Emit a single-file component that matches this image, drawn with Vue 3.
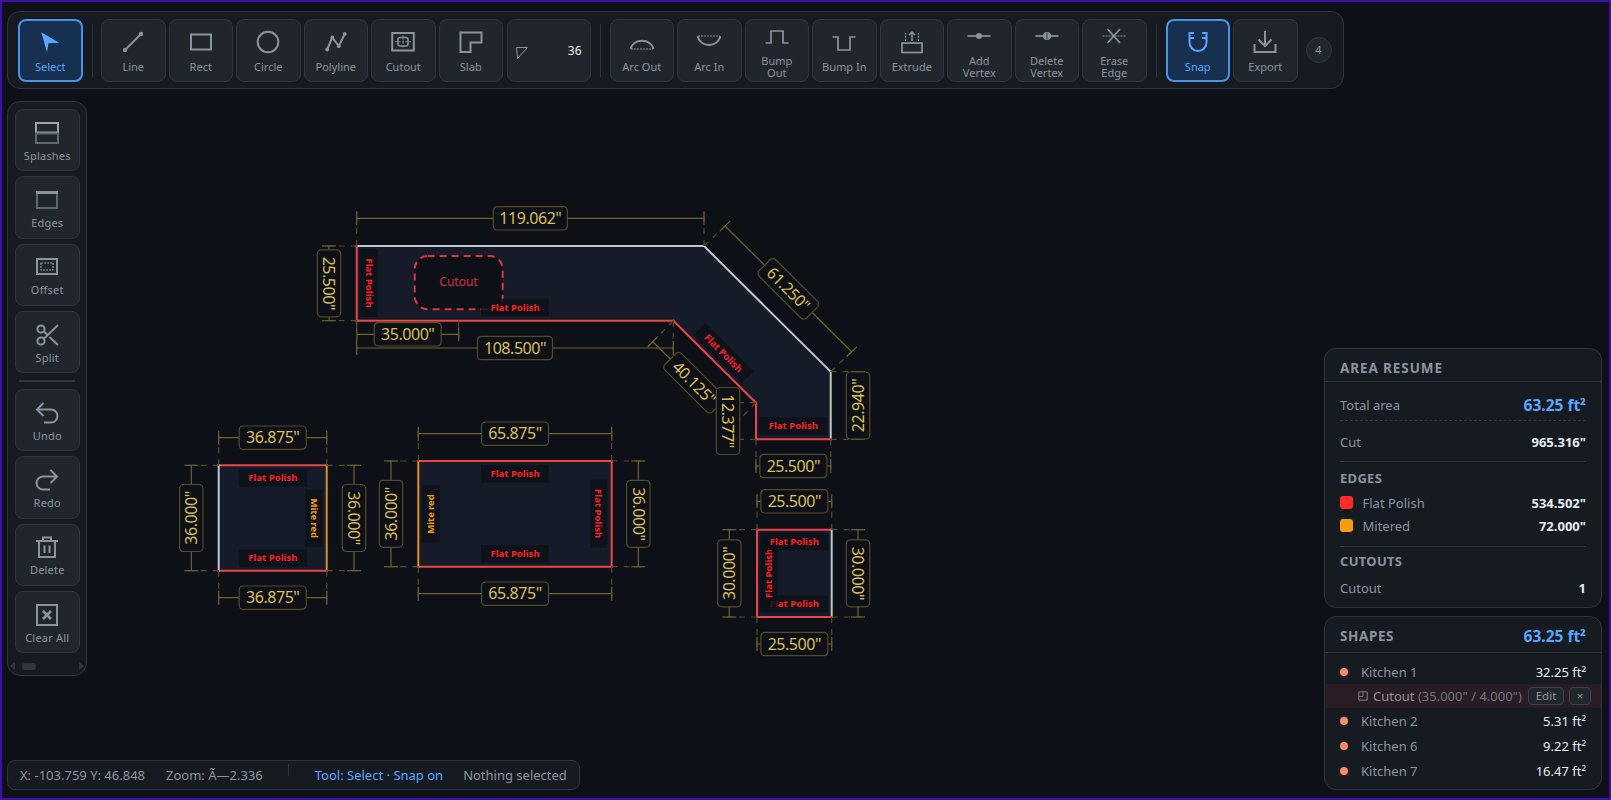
<script setup>
// toolbar icons, drawn on a 24 box
const arrow = '<path d="M3.3 2.3 21.2 12.7 10.5 13.3 9 22.3Z" fill="currentColor" stroke="none"/>'
const tools1 = [
  { label: 'Line', icon: '<path d="M4 20 20 4"/><circle cx="4" cy="20" r="2.2" fill="currentColor" stroke="none"/><circle cx="20" cy="4" r="2.2" fill="currentColor" stroke="none"/>' },
  { label: 'Rect', icon: '<rect x="2" y="4.5" width="20" height="15"/>' },
  { label: 'Circle', icon: '<circle cx="12" cy="12" r="10.3"/>' },
  { label: 'Polyline', icon: '<path d="M3.1 19.5 8.3 7.5 14.8 16.2 20.7 4"/><circle cx="3.1" cy="19.5" r="1.9" fill="currentColor" stroke="none"/><circle cx="8.3" cy="7.5" r="1.9" fill="currentColor" stroke="none"/><circle cx="14.8" cy="16.2" r="1.9" fill="currentColor" stroke="none"/><circle cx="20.7" cy="4" r="1.9" fill="currentColor" stroke="none"/>' },
  { label: 'Cutout', icon: '<rect x="1.2" y="3" width="21.6" height="17.5"/><rect x="7" y="7.5" width="10" height="8.5" rx="2" stroke-width="1.6"/><path d="M4 11.7H20M12 5V18.5" stroke-width=".8" stroke-dasharray="2 1.5"/>' },
  { label: 'Slab', icon: '<path d="M1.5 2.5H22.5V12.5H11.5V22H1.5Z"/>' },
]
const tools2 = [
  { label: 'Arc Out', icon: '<path d="M.5 19C3.5 8 20.5 8 23.5 19"/><path d="M1 19H23" stroke-width="1" stroke-dasharray="2 1"/>' },
  { label: 'Arc In', icon: '<path d="M.5 6C3.5 18 20.5 18 23.5 6"/><path d="M1 6H23" stroke-width="1" stroke-dasharray="2 1"/>' },
  { label: ['Bump', 'Out'], icon: '<path d="M.5 19H6V7H18V19H23.5" stroke-width="1.7"/>' },
  { label: 'Bump In', icon: '<path d="M.5 7H6V20H18V7H23.5" stroke-width="1.7"/>' },
  { label: 'Extrude', icon: '<rect x="2" y="13" width="20" height="9.5" stroke-width="1.7"/><path d="M12 11V2M9 5 12 2 15 5" stroke-width="1.5"/><path d="M5.5 11V3M18.5 11V3" stroke-width="1.2" stroke-dasharray="2 1.2"/>' },
  { label: ['Add', 'Vertex'], icon: '<path d="M.5 12H23.5" stroke-width="1.7"/><circle cx="12" cy="12" r="3" fill="currentColor" stroke="none"/>' },
  { label: ['Delete', 'Vertex'], icon: '<path d="M.5 12H23.5" stroke-width="1.7"/><circle cx="12" cy="12" r="4" fill="currentColor" stroke="none"/><path d="M12 8.5V15.5" stroke="#21262d" stroke-width=".8"/>' },
  { label: ['Erase', 'Edge'], icon: '<path d="M.5 12H23.5" stroke-width="1" stroke-dasharray="2 1"/><path d="M5.5 5 18 19M18 5 5.5 19" stroke-width="1.7"/>' },
]
const snapIcon = '<path d="M8 3H3.5V12.5A8.5 8.5 0 0 0 20.5 12.5V3H16M3.5 8H8M20.5 8H16"/>'
const exportIcon = '<path d="M12 1V16M5.5 9.5 12 16 18.5 9.5"/><path d="M1.5 14V22H22.5V14"/>'

const sideTop = [
  { label: 'Splashes', icon: '<rect x="1" y="2" width="22" height="9.5" stroke="#9ba3ad"/><rect x="1" y="12.5" width="22" height="9.5" stroke="#5f6770"/>' },
  { label: 'Edges', icon: '<rect x="2" y="5" width="20" height="15" stroke="#5f6770"/><path d="M1 4.5H23" stroke-width="3"/>' },
  { label: 'Offset', icon: '<rect x="2" y="4" width="20" height="15"/><rect x="6" y="8" width="12" height="7" stroke-width="1.2" stroke-dasharray="2 1"/>' },
  { label: 'Split', icon: '<circle cx="6" cy="6" r="3.6"/><circle cx="6" cy="18" r="3.6"/><path d="M23 2 9 15.5M14.5 14 23 22M9 8.5 12 11.5"/>' },
]
const sideBottom = [
  { label: 'Undo', icon: '<path d="M8.5 15 2 8.5 8.5 2"/><path d="M2 8.5H16A6.5 6.5 0 0 1 16 21.5H9"/>' },
  { label: 'Redo', icon: '<path d="M15.5 15 22 8.5 15.5 2"/><path d="M22 8.5H8A6.5 6.5 0 0 0 8 21.5H15"/>' },
  { label: 'Delete', icon: '<path d="M1 6H23M8 6V2.5H16V6M4 6V22H20V6M9.5 10.5V18M14.5 10.5V18"/>' },
  { label: 'Clear All', icon: '<rect x="2" y="2" width="20" height="20"/><path d="M8 8 16 16M16 8 8 16" stroke-width="2.6"/>' },
]

// shapes on the canvas
const slab = [[356.7, 246], [704, 246], [830.7, 371.7], [830.7, 439.3], [756, 439.3], [756, 402.7], [673.3, 320.7], [356.7, 320.7]]
const WHITE = '#c0c6ce'
const RED = '#ef4444'
const ORANGE = '#e08e1f'

function rectPoints(x1, y1, x2, y2) {
  return [[x1, y1], [x2, y1], [x2, y2], [x1, y2]]
}
const shapes = [
  { pts: slab, edges: [WHITE, WHITE, WHITE, RED, RED, RED, RED, RED] },
  { pts: rectPoints(218.7, 465.3, 326.7, 570.7), edges: [RED, ORANGE, RED, WHITE] },
  { pts: rectPoints(418.3, 461, 611.7, 566.7), edges: [RED, RED, RED, ORANGE] },
  { pts: rectPoints(757, 529.7, 831.7, 617), edges: [RED, WHITE, RED, RED] },
]
const toPath = (pts) => pts.map(p => p.join(',')).join(' ')

function dim(a, b, off, text, rot = 0, w = 67) {
  const len = Math.hypot(off[0], off[1])
  const u = [off[0] / len, off[1] / len]
  const p1 = [a[0] + off[0], a[1] + off[1]]
  const p2 = [b[0] + off[0], b[1] + off[1]]
  return {
    text, w, rot, p1, p2,
    cx: (p1[0] + p2[0]) / 2,
    cy: (p1[1] + p2[1]) / 2,
    ext: [[a, p1], [b, p2]].map(([s, p]) => [s, [p[0] + u[0] * 7, p[1] + u[1] * 7]]),
    ticks: [p1, p2].map(p => [[p[0] - u[0] * 7, p[1] - u[1] * 7], [p[0] + u[0] * 7, p[1] + u[1] * 7]]),
  }
}
const s2 = [218.7, 465.3, 326.7, 570.7]
const s3 = [418.3, 461, 611.7, 566.7]
const s4 = [757, 529.7, 831.7, 617]
function boxDims(s, top, bottom, left, right, wText, hText, rightRot = 90) {
  return [
    dim([s[0], s[1]], [s[2], s[1]], [0, top], wText),
    dim([s[0], s[3]], [s[2], s[3]], [0, bottom], wText),
    dim([s[0], s[1]], [s[0], s[3]], [left, 0], hText, -90),
    dim([s[2], s[1]], [s[2], s[3]], [right, 0], hText, rightRot),
  ]
}
const dims = [
  dim([356.7, 246], [704, 246], [0, -27.7], '119.062"', 0, 74),
  dim([356.7, 246], [356.7, 320.7], [-27.7, 0], '25.500"', 90),
  dim([356.7, 320.7], [458.7, 320.7], [0, 13.6], '35.000"'),
  dim([356.7, 320.7], [673.3, 320.7], [0, 27.3], '108.500"', 0, 75),
  dim([704, 246], [830.7, 371.7], [21, -20], '61.250"', 45, 67),
  dim([673.3, 320.7], [756, 402.7], [-20.5, 21], '40.125"', 45, 67),
  dim([756, 402.7], [756, 439.3], [-28, 0], '12.377"', 90),
  dim([830.7, 371.7], [830.7, 439.3], [27.3, 0], '22.940"', -90),
  dim([756, 439.3], [830.7, 439.3], [0, 26.7], '25.500"'),
  ...boxDims(s2, -27.6, 27, -27.4, 27.3, '36.875"', '36.000"'),
  ...boxDims(s3, -27.3, 27, -27.3, 26.6, '65.875"', '36.000"'),
  ...boxDims(s4, -28.4, 27, -27.7, 26.3, '25.500"', '30.000"'),
]

// edge finish labels: centre, rotation, box size
const finishes = [
  { x: 369, y: 283, rot: 90, w: 68 },
  { x: 515, y: 307.5, rot: 0, w: 68 },
  { x: 723.3, y: 353.3, rot: 45, w: 68 },
  { x: 793.3, y: 426, rot: 0, w: 68 },
  { x: 272.8, y: 478, rot: 0, w: 68 },
  { x: 272.8, y: 558, rot: 0, w: 68 },
  { x: 314, y: 518.3, rot: 90, w: 57, miter: true },
  { x: 515, y: 474, rot: 0, w: 68 },
  { x: 515, y: 554, rot: 0, w: 68 },
  { x: 431, y: 514, rot: -90, w: 57, miter: true },
  { x: 598.7, y: 513.7, rot: 90, w: 68 },
  { x: 794.3, y: 604, rot: 0, w: 68 },
  { x: 769, y: 573.3, rot: -90, w: 68 },
  { x: 794.3, y: 541.5, rot: 0, w: 68 },
]

const shapeRows = [
  { name: 'Kitchen 1', area: '32.25' },
  { name: 'Kitchen 2', area: '5.31' },
  { name: 'Kitchen 6', area: '9.22' },
  { name: 'Kitchen 7', area: '16.47' },
]
</script>

<template>
  <div class="app">
    <svg class="canvas" width="1611" height="800" viewBox="0 0 1611 800">
      <g v-for="(s, i) in shapes" :key="'s' + i">
        <polygon :points="toPath(s.pts)" fill="#151b28" />
      </g>
      <rect x="414.7" y="256" width="88" height="53.3" rx="13" fill="#0d1117" stroke="#e5303f" stroke-width="2" stroke-dasharray="7 5" />
      <text x="458.5" y="282" class="cut-text" text-anchor="middle" dy=".35em">Cutout</text>
      <g v-for="(s, i) in shapes" :key="'e' + i">
        <line
          v-for="(p, j) in s.pts"
          :key="j"
          :x1="p[0]" :y1="p[1]"
          :x2="s.pts[(j + 1) % s.pts.length][0]" :y2="s.pts[(j + 1) % s.pts.length][1]"
          :stroke="s.edges[j]"
          stroke-width="2"
          stroke-linecap="square"
        />
      </g>
      <g v-for="(f, i) in finishes" :key="'f' + i" :transform="`translate(${f.x} ${f.y}) rotate(${f.rot})`">
        <rect :x="-f.w / 2" y="-8.7" :width="f.w" height="17.4" fill="#0d1117" fill-opacity=".82" />
        <text v-if="f.miter" class="finish miter" text-anchor="middle" dy=".35em">Mite<tspan dx="2">red</tspan></text>
        <text v-else class="finish" text-anchor="middle" dy=".35em">Flat Polish</text>
      </g>
      <g v-for="(d, i) in dims" :key="'d' + i">
        <line
          v-for="(l, j) in d.ext"
          :key="'x' + j"
          :x1="l[0][0]" :y1="l[0][1]" :x2="l[1][0]" :y2="l[1][1]"
          class="dim-ext"
        />
        <line :x1="d.p1[0]" :y1="d.p1[1]" :x2="d.p2[0]" :y2="d.p2[1]" class="dim-line" />
        <line
          v-for="(l, j) in d.ticks"
          :key="'t' + j"
          :x1="l[0][0]" :y1="l[0][1]" :x2="l[1][0]" :y2="l[1][1]"
          class="dim-line"
        />
        <g :transform="`translate(${d.cx} ${d.cy}) rotate(${d.rot})`">
          <rect :x="-d.w / 2" y="-11.7" :width="d.w" height="23.4" rx="4" class="dim-box" />
          <text class="dim-text" text-anchor="middle" dy=".36em">{{ d.text }}</text>
        </g>
      </g>
    </svg>

    <div class="overlay">
      <div class="toolbar">
        <button class="tool active">
          <svg class="icon" viewBox="0 0 24 24" v-html="arrow"></svg>
          <span class="lbl">Select</span>
        </button>
        <div class="vsep first"></div>
        <button v-for="t in tools1" :key="t.label" class="tool">
          <svg class="icon" viewBox="0 0 24 24" v-html="t.icon"></svg>
          <span class="lbl">{{ t.label }}</span>
        </button>
        <div class="tool angle">
          <svg class="tri" viewBox="0 0 12 12"><path d="M.5 .5H11.5L1.5 11.5Z" /></svg>
          <span class="angle-val">36</span>
        </div>
        <div class="vsep"></div>
        <button v-for="t in tools2" :key="String(t.label)" class="tool">
          <svg class="icon" viewBox="0 0 24 24" v-html="t.icon"></svg>
          <span v-if="Array.isArray(t.label)" class="lbl">{{ t.label[0] }}<br />{{ t.label[1] }}</span>
          <span v-else class="lbl">{{ t.label }}</span>
        </button>
        <div class="vsep"></div>
        <button class="tool active">
          <svg class="icon" viewBox="0 0 24 24" v-html="snapIcon"></svg>
          <span class="lbl">Snap</span>
        </button>
        <button class="tool">
          <svg class="icon" viewBox="0 0 24 24" v-html="exportIcon"></svg>
          <span class="lbl">Export</span>
        </button>
        <div class="badge">4</div>
      </div>

      <div class="side">
        <button v-for="t in sideTop" :key="t.label" class="tool">
          <svg class="icon" viewBox="0 0 24 24" v-html="t.icon"></svg>
          <span class="lbl">{{ t.label }}</span>
        </button>
        <div class="hsep"></div>
        <button v-for="t in sideBottom" :key="t.label" class="tool">
          <svg class="icon" viewBox="0 0 24 24" v-html="t.icon"></svg>
          <span class="lbl">{{ t.label }}</span>
        </button>
        <div class="scroll">
          <span class="arr arr-l"></span>
          <span class="thumb"></span>
          <span class="arr arr-r"></span>
        </div>
      </div>

      <div class="right">
        <section class="panel">
          <header class="head">AREA RESUME</header>
          <div class="body">
            <div class="row total">
              <span>Total area</span>
              <b class="blue big">63.25 ft²</b>
            </div>
            <div class="row cut">
              <span>Cut</span>
              <b>965.316"</b>
            </div>
            <div class="sub">EDGES</div>
            <div class="row edge">
              <span class="with-swatch"><i class="swatch red"></i>Flat Polish</span>
              <b>534.502"</b>
            </div>
            <div class="row edge">
              <span class="with-swatch"><i class="swatch orange"></i>Mitered</span>
              <b>72.000"</b>
            </div>
            <div class="sub second">CUTOUTS</div>
            <div class="row edge">
              <span>Cutout</span>
              <b>1</b>
            </div>
          </div>
        </section>

        <section class="panel shapes">
          <header class="head split">
            <span>SHAPES</span>
            <b class="blue big">63.25 ft²</b>
          </header>
          <div class="list">
            <template v-for="(s, i) in shapeRows" :key="s.name">
              <div class="shape-row">
                <span class="name"><i class="dot"></i>{{ s.name }}</span>
                <span class="area">{{ s.area }} ft²</span>
              </div>
              <div v-if="i === 0" class="cut-row">
                <svg class="cut-ico" viewBox="0 0 12 12"><path d="M1 1H11V11H1ZM1 6.5H6V1" /></svg>
                <span class="cut-name">Cutout <em>(35.000" / 4.000")</em></span>
                <button class="mini edit">Edit</button>
                <button class="mini close">×</button>
              </div>
            </template>
          </div>
        </section>
      </div>

      <div class="status">
        <span class="coord">X: -103.759 Y: 46.848</span>
        <span class="zoom">Zoom: Ã—2.336</span>
        <span class="status-sep"></span>
        <span class="tool-state">Tool: Select · Snap on</span>
        <span class="sel">Nothing selected</span>
      </div>
    </div>
  </div>
</template>

<style scoped>
.app {
  position: relative;
  width: 1611px;
  height: 800px;
  overflow: hidden;
  background: #0d1117;
  font-family: "Noto Sans", "Liberation Sans", sans-serif;
}
.app::after {
  content: "";
  position: absolute;
  inset: 0;
  border: 2px solid #3b0fa8;
  pointer-events: none;
}
.canvas {
  position: absolute;
  left: 0;
  top: 0;
}
.cut-text {
  fill: #d92c3c;
  font-size: 12px;
}
.finish {
  fill: #ff2020;
  font-size: 9.6px;
  font-weight: 700;
}
.miter {
  fill: #f59e0b;
}
.dim-line {
  stroke: #6e6230;
  stroke-width: 1.2;
}
.dim-ext {
  stroke: #544b27;
  stroke-width: 1.2;
  stroke-dasharray: 6 6;
}
.dim-box {
  fill: #0d1117;
  stroke: #544b27;
  stroke-width: 1.2;
}
.dim-text {
  fill: #d9bf55;
  font-size: 16px;
  letter-spacing: -.45px;
}

.overlay {
  position: relative;
  box-sizing: border-box;
  width: 100%;
  height: 100%;
  padding: 11px 9px 10px 7px;
  display: grid;
  grid-template-columns: auto 1fr auto;
  grid-template-rows: auto 1fr auto;
}

.toolbar {
  grid-column: 1 / -1;
  justify-self: start;
  display: flex;
  align-items: center;
  gap: 3px;
  height: 78px;
  box-sizing: border-box;
  padding: 0 11px 0 10px;
  background: #161b22;
  border: 1px solid #30363d;
  border-radius: 13px;
}
.tool {
  box-sizing: border-box;
  width: 64.5px;
  height: 63px;
  flex: none;
  display: flex;
  flex-direction: column;
  align-items: center;
  justify-content: center;
  gap: 7px;
  padding: 3px 0 0;
  background: #21262d;
  border: 1px solid #30363d;
  border-radius: 8px;
  color: #8b949e;
  font-family: inherit;
}
.tool.active {
  background: #17304f;
  border: 2px solid #4a94e8;
  color: #58a6ff;
}
.icon {
  width: 24px;
  height: 24px;
  flex: none;
  fill: none;
  stroke: currentColor;
  stroke-width: 2;
}
.lbl {
  font-size: 11px;
  line-height: 12px;
  text-align: center;
}
.vsep {
  width: 1px;
  height: 53px;
  margin: 0 6px;
  background: #30363d;
  flex: none;
}
.vsep.first {
  margin-right: 5.5px;
}
.angle {
  width: 83.5px;
  margin-left: 1px;
  flex-direction: row;
  justify-content: space-between;
  padding: 0 8px;
}
.tri {
  width: 12px;
  height: 12px;
  margin-top: 6px;
  fill: none;
  stroke: #8b949e;
  stroke-width: 1;
}
.angle-val {
  color: #e6edf3;
  font-size: 12px;
}
.badge {
  width: 26px;
  height: 26px;
  margin-left: 5px;
  box-sizing: border-box;
  border: 1px solid #30363d;
  border-radius: 50%;
  background: #21262d;
  color: #8b949e;
  font-size: 11px;
  line-height: 24px;
  text-align: center;
}

.side {
  grid-column: 1;
  grid-row: 2;
  align-self: start;
  margin-top: 11.5px;
  width: 80px;
  box-sizing: border-box;
  padding: 7.5px 7px 4px;
  display: flex;
  flex-direction: column;
  gap: 5px;
  background: #161b22;
  border: 1px solid #30363d;
  border-radius: 13px;
}
.side .tool {
  height: 62.3px;
  gap: 5px;
  padding-top: 2px;
}
.side .lbl {
  letter-spacing: .2px;
}
.hsep {
  height: 2px;
  margin: 2px 4px;
  background: #30363d;
}
.scroll {
  display: flex;
  align-items: center;
  gap: 4px;
  height: 10px;
  margin: 3px -5px 0;
}
.arr {
  width: 0;
  height: 0;
  border-top: 4px solid transparent;
  border-bottom: 4px solid transparent;
}
.arr-l {
  border-right: 5px solid #30363d;
}
.arr-r {
  border-left: 5px solid #30363d;
  margin-left: auto;
}
.thumb {
  width: 14px;
  height: 7px;
  margin-left: 3px;
  border-radius: 3px;
  background: #30363d;
}

.right {
  grid-column: 3;
  grid-row: 2 / 4;
  align-self: end;
  width: 278px;
  display: flex;
  flex-direction: column;
  gap: 8px;
}
.panel {
  box-sizing: border-box;
  background: #161b22;
  border: 1px solid #30363d;
  border-radius: 12px;
  overflow: hidden;
}
.head {
  box-sizing: border-box;
  height: 33px;
  padding: 5px 15px 0;
  display: flex;
  align-items: center;
  border-bottom: 1px solid #30363d;
  color: #8b949e;
  font-size: 13.5px;
  font-weight: 700;
  letter-spacing: .9px;
}
.head.split {
  justify-content: space-between;
  height: 36px;
  padding-top: 3px;
  letter-spacing: .6px;
}
.body {
  padding: 5px 15px 8px;
  color: #8b949e;
  font-size: 13px;
}
.row {
  display: flex;
  justify-content: space-between;
  align-items: center;
}
.row b {
  color: #e6edf3;
  font-weight: 700;
  font-size: 13px;
}
.row b.blue,
.blue {
  color: #58a6ff;
}
.big {
  font-size: 15.5px;
  font-weight: 700;
  letter-spacing: 0;
}
.row b.big {
  font-size: 15.5px;
}
.total {
  height: 34px;
  padding-top: 3px;
  box-sizing: border-box;
  border-bottom: 1px dashed #30363d;
}
.cut {
  height: 41px;
  padding-top: 2px;
  box-sizing: border-box;
  border-bottom: 1px solid #30363d;
}
.sub {
  margin-top: 7px;
  margin-bottom: 4px;
  height: 18px;
  line-height: 18px;
  font-size: 13px;
  font-weight: 700;
  letter-spacing: .3px;
}
.sub.second {
  padding-top: 5px;
  height: 18px;
  margin-bottom: 6px;
  border-top: 1px solid #30363d;
}
.edge {
  height: 23px;
}
.edge + .sub {
  margin-top: 9px;
}
.with-swatch {
  display: flex;
  align-items: center;
  gap: 10px;
}
.swatch {
  width: 12.5px;
  height: 13px;
  border-radius: 3px;
}
.swatch.red {
  background: #ff2a2a;
}
.swatch.orange {
  background: #f59e0b;
}
.list {
  padding: 6px 0 5.5px;
}
.shape-row {
  height: 25px;
  padding: 0 15px;
  display: flex;
  align-items: center;
  justify-content: space-between;
  font-size: 13px;
}
.name {
  display: flex;
  align-items: center;
  gap: 13px;
  color: #8b949e;
}
.dot {
  width: 8px;
  height: 8px;
  border-radius: 50%;
  background: #ff8a65;
}
.area {
  color: #e6edf3;
  font-size: 13px;
}
.cut-row {
  height: 23.4px;
  margin-bottom: 1px;
  padding: 0 10px 0 33px;
  display: flex;
  align-items: center;
  background: #2a1c24;
  font-size: 13px;
  color: #8b949e;
}
.cut-ico {
  width: 10px;
  height: 10px;
  margin-right: 5px;
  fill: none;
  stroke: #8b949e;
  stroke-width: 1;
}
.cut-name {
  flex: 1;
  white-space: nowrap;
}
.cut-name em {
  font-style: normal;
  color: #6e7681;
}
.mini {
  height: 18px;
  box-sizing: border-box;
  padding: 0;
  background: #21262d;
  border: 1px solid #3a4048;
  border-radius: 4px;
  color: #8b949e;
  font-family: inherit;
  font-size: 11.5px;
  line-height: 14px;
}
.edit {
  width: 36px;
}
.close {
  width: 22px;
  margin-left: 5px;
}

.status {
  grid-column: 1 / 3;
  grid-row: 3;
  align-self: end;
  justify-self: start;
  width: 573px;
  height: 30px;
  box-sizing: border-box;
  padding: 0 12px;
  display: flex;
  align-items: center;
  background: #161b22;
  border: 1px solid #30363d;
  border-radius: 8px;
  color: #8b949e;
  font-size: 13px;
  white-space: nowrap;
}
.zoom {
  margin-left: 21px;
}
.status-sep {
  width: 1px;
  height: 12px;
  margin: -10px 26px 0 25px;
  background: #30363d;
}
.tool-state {
  color: #58a6ff;
}
.sel {
  margin-left: 20px;
}
</style>

<style>
html, body {
  margin: 0;
  background: #0d1117;
}
</style>
